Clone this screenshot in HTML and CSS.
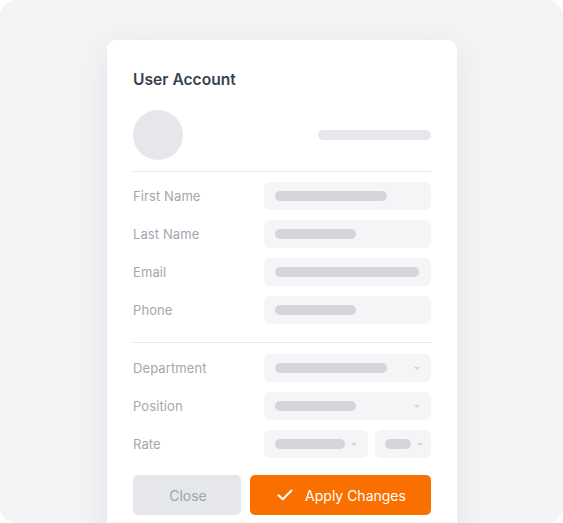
FILE: index.html
```html
<!DOCTYPE html>
<html>
<head>
<meta charset="utf-8">
<link rel="stylesheet" href="styles.css">
</head>
<body>
<div class="frame">
  <div class="card">
    <h1 class="title">User Account</h1>
    <div class="profile">
      <div class="avatar"></div>
      <div class="bar bar-profile"></div>
    </div>
    <div class="divider divider-top"></div>
    <div class="rows">
      <div class="row"><span class="label">First Name</span><div class="input"><div class="bar w112"></div></div></div>
      <div class="row"><span class="label">Last Name</span><div class="input"><div class="bar w81"></div></div></div>
      <div class="row"><span class="label">Email</span><div class="input"><div class="bar w144"></div></div></div>
      <div class="row"><span class="label">Phone</span><div class="input"><div class="bar w81"></div></div></div>
    </div>
    <div class="divider divider-mid"></div>
    <div class="rows">
      <div class="row"><span class="label">Department</span><div class="input select"><div class="bar w112"></div><span class="caret"></span></div></div>
      <div class="row"><span class="label">Position</span><div class="input select"><div class="bar w81"></div><span class="caret"></span></div></div>
      <div class="row"><span class="label">Rate</span>
        <div class="split">
          <div class="input select"><div class="bar w70"></div><span class="caret"></span></div>
          <div class="input select small"><div class="bar w26"></div><span class="caret"></span></div>
        </div>
      </div>
    </div>
    <div class="actions">
      <button class="btn btn-close">Close</button>
      <button class="btn btn-apply">
        <svg width="16" height="12" viewBox="0 0 16 12" fill="none"><path d="M1.5 6.2 L5.8 10.3 L14.5 1.5" stroke="#fff" stroke-width="2" stroke-linecap="round" stroke-linejoin="round"/></svg>
        <span>Apply Changes</span>
      </button>
    </div>
  </div>
</div>
</body>
</html>
```
FILE: styles.css
```css
html, body {
  margin: 0;
  padding: 0;
  background: #ffffff;
}
body {
  font-family: Inter, "Noto Sans", sans-serif;
}
.frame {
  width: 563px;
  height: 523px;
  background: #f3f4f6;
  border-radius: 16px;
  overflow: hidden;
  box-sizing: border-box;
  padding: 40px 0 0 107px;
}
.card {
  width: 350px;
  height: 520px;
  box-sizing: border-box;
  background: #ffffff;
  border-radius: 9px;
  padding: 30px 26px 0 26px;
  box-shadow: 0 6px 36px rgba(17, 24, 39, 0.07);
}
.title {
  margin: 0;
  font-size: 15.6px;
  line-height: 20px;
  font-weight: 600;
  color: #374151;
}
.profile {
  margin-top: 20px;
  display: flex;
  align-items: center;
  justify-content: space-between;
}
.avatar {
  width: 50px;
  height: 50px;
  border-radius: 50%;
  background: #e5e7eb;
}
.bar {
  height: 10px;
  border-radius: 5px;
  background: #d4d6da;
}
.bar-profile {
  width: 113px;
  background: #e5e7eb;
}
.divider {
  height: 1px;
  background: #e5e7eb;
}
.divider-top {
  margin: 11px 0 10px;
}
.divider-mid {
  margin: 18px 0 11px;
}
.rows {
  display: flex;
  flex-direction: column;
  gap: 10px;
}
.row {
  display: grid;
  grid-template-columns: 131px 1fr;
  align-items: center;
}
.label {
  font-size: 13px;
  color: #a3a7ae;
  letter-spacing: 0.1px;
}
.input {
  height: 28px;
  background: #f4f5f6;
  border-radius: 6px;
  display: flex;
  align-items: center;
  padding: 0 11px;
  box-sizing: border-box;
}
.select {
  justify-content: space-between;
}
.caret {
  width: 0;
  height: 0;
  border-left: 3px solid transparent;
  border-right: 3px solid transparent;
  border-top: 3px solid #d4d6da;
}
.split {
  display: grid;
  grid-template-columns: 104px 1fr;
  gap: 7px;
}
.small {
  padding: 0 8px 0 10px;
}
.w26 { width: 26px; }
.w70 { width: 70px; }
.w81 { width: 81px; }
.w112 { width: 112px; }
.w144 { width: 144px; }
.actions {
  margin-top: 17px;
  display: grid;
  grid-template-columns: 108px 1fr;
  gap: 9px;
}
.btn {
  height: 40px;
  border: none;
  border-radius: 5px;
  font-family: Inter, "Noto Sans", sans-serif;
  font-size: 14px;
  display: flex;
  align-items: center;
  justify-content: center;
  gap: 12px;
  padding: 0 0 0 2px;
}
.btn-close {
  background: #e5e7eb;
  color: #9ca3af;
}
.btn-apply {
  background: #fa7000;
  color: #ffffff;
}
```
